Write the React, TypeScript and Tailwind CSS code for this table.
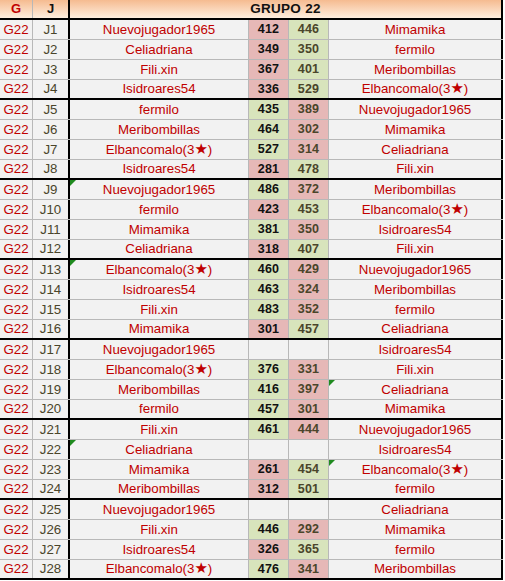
import React from "react";

type Row = {
  j: string;
  p1: string;
  s1: string;
  c1: "r" | "g" | "";
  s2: string;
  c2: "r" | "g" | "";
  p2: string;
  t1?: boolean;
  t2?: boolean;
};

const E = "Elbancomalo(3★)";

const rows: Row[] = [
  { j: "J1", p1: "Nuevojugador1965", s1: "412", c1: "r", s2: "446", c2: "g", p2: "Mimamika" },
  { j: "J2", p1: "Celiadriana", s1: "349", c1: "r", s2: "350", c2: "g", p2: "fermilo" },
  { j: "J3", p1: "Fili.xin", s1: "367", c1: "r", s2: "401", c2: "g", p2: "Meribombillas" },
  { j: "J4", p1: "Isidroares54", s1: "336", c1: "r", s2: "529", c2: "g", p2: E },
  { j: "J5", p1: "fermilo", s1: "435", c1: "g", s2: "389", c2: "r", p2: "Nuevojugador1965" },
  { j: "J6", p1: "Meribombillas", s1: "464", c1: "g", s2: "302", c2: "r", p2: "Mimamika" },
  { j: "J7", p1: E, s1: "527", c1: "g", s2: "314", c2: "r", p2: "Celiadriana" },
  { j: "J8", p1: "Isidroares54", s1: "281", c1: "r", s2: "478", c2: "g", p2: "Fili.xin" },
  { j: "J9", p1: "Nuevojugador1965", s1: "486", c1: "g", s2: "372", c2: "r", p2: "Meribombillas", t1: true },
  { j: "J10", p1: "fermilo", s1: "423", c1: "r", s2: "453", c2: "g", p2: E },
  { j: "J11", p1: "Mimamika", s1: "381", c1: "g", s2: "350", c2: "r", p2: "Isidroares54" },
  { j: "J12", p1: "Celiadriana", s1: "318", c1: "r", s2: "407", c2: "g", p2: "Fili.xin" },
  { j: "J13", p1: E, s1: "460", c1: "g", s2: "429", c2: "r", p2: "Nuevojugador1965", t1: true },
  { j: "J14", p1: "Isidroares54", s1: "463", c1: "g", s2: "324", c2: "r", p2: "Meribombillas" },
  { j: "J15", p1: "Fili.xin", s1: "483", c1: "g", s2: "352", c2: "r", p2: "fermilo" },
  { j: "J16", p1: "Mimamika", s1: "301", c1: "r", s2: "457", c2: "g", p2: "Celiadriana" },
  { j: "J17", p1: "Nuevojugador1965", s1: "", c1: "", s2: "", c2: "", p2: "Isidroares54" },
  { j: "J18", p1: E, s1: "376", c1: "g", s2: "331", c2: "r", p2: "Fili.xin" },
  { j: "J19", p1: "Meribombillas", s1: "416", c1: "g", s2: "397", c2: "r", p2: "Celiadriana", t2: true },
  { j: "J20", p1: "fermilo", s1: "457", c1: "g", s2: "301", c2: "r", p2: "Mimamika" },
  { j: "J21", p1: "Fili.xin", s1: "461", c1: "g", s2: "444", c2: "r", p2: "Nuevojugador1965" },
  { j: "J22", p1: "Celiadriana", s1: "", c1: "", s2: "", c2: "", p2: "Isidroares54", t1: true },
  { j: "J23", p1: "Mimamika", s1: "261", c1: "r", s2: "454", c2: "g", p2: E, t2: true },
  { j: "J24", p1: "Meribombillas", s1: "312", c1: "r", s2: "501", c2: "g", p2: "fermilo" },
  { j: "J25", p1: "Nuevojugador1965", s1: "", c1: "", s2: "", c2: "", p2: "Celiadriana" },
  { j: "J26", p1: "Fili.xin", s1: "446", c1: "g", s2: "292", c2: "r", p2: "Mimamika" },
  { j: "J27", p1: "Isidroares54", s1: "326", c1: "r", s2: "365", c2: "g", p2: "fermilo" },
  { j: "J28", p1: E, s1: "476", c1: "g", s2: "341", c2: "r", p2: "Meribombillas" },
];

function Name({ text }: { text: string }) {
  if (text.endsWith("★)")) {
    const base = text.slice(0, -2);
    return (
      <span>
        {base}
        <span className="text-[15px] leading-none" style={{ fontFamily: "'DejaVu Sans', sans-serif" }}>★</span>
        )
      </span>
    );
  }
  return <span>{text}</span>;
}

function Tri() {
  return (
    <div className="absolute left-0 top-0 h-0 w-0 border-t-[6px] border-r-[6px] border-t-[#1f8a1f] border-r-transparent" />
  );
}

function Score({ v, c, dark }: { v: string; c: string; dark: boolean }) {
  const bg = c === "r" ? "bg-[#e6b8b7]" : c === "g" ? "bg-[#d8e4bc]" : "bg-[#f2f2f2]";
  const tc = dark ? "text-[#111111]" : "text-[#4a452a]";
  return (
    <div className={`flex w-[40px] items-center justify-center border-r border-[#b8b8b8] ${bg} ${tc} text-[12.5px] font-bold tracking-[0.2px]`}>
      {v}
    </div>
  );
}

export default function App() {
  return (
    <div
      className="w-[505px] bg-white"
      style={{ fontFamily: "'Liberation Sans', Arial, sans-serif" }}
    >
      <div className="w-[503px]">
        <div className="flex h-[20px] border-b-2 border-black bg-linear-to-b from-[#f5bb90] to-[#fdeede] text-[13px] font-bold">
          <div className="flex w-[33px] items-center justify-center border-r border-[#b8b8b8] text-[#c00000]">G</div>
          <div className="flex w-[37px] items-center justify-center border-r-2 border-black text-[#111]">J</div>
          <div className="flex flex-1 items-center justify-center border-r-2 border-black text-[13.5px] tracking-[0.3px] text-[#111]">GRUPO 22</div>
        </div>
        {rows.map((r, i) => {
          const end = i % 4 === 3;
          const rb = end ? "border-b-2 border-black" : "border-b border-[#b8b8b8]";
          return (
            <div key={r.j} className={`flex h-[20px] bg-[#f2f2f2] text-[13.3px] ${rb}`}>
              <div className="flex w-[33px] items-center justify-center border-r border-[#b8b8b8] text-[#c00000]">G22</div>
              <div className="flex w-[37px] items-center justify-center border-r-2 border-black text-[#4a452a]">{r.j}</div>
              <div className="relative flex w-[179px] items-center justify-center border-r border-[#b8b8b8] text-[#c00000]">
                {r.t1 && <Tri />}
                <Name text={r.p1} />
              </div>
              <Score v={r.s1} c={r.c1} dark={true} />
              <Score v={r.s2} c={r.c2} dark={false} />
              <div className="relative flex w-[174px] items-center justify-center border-r-2 border-black text-[#c00000]">
                {r.t2 && <Tri />}
                <Name text={r.p2} />
              </div>
            </div>
          );
        })}
      </div>
    </div>
  );
}
